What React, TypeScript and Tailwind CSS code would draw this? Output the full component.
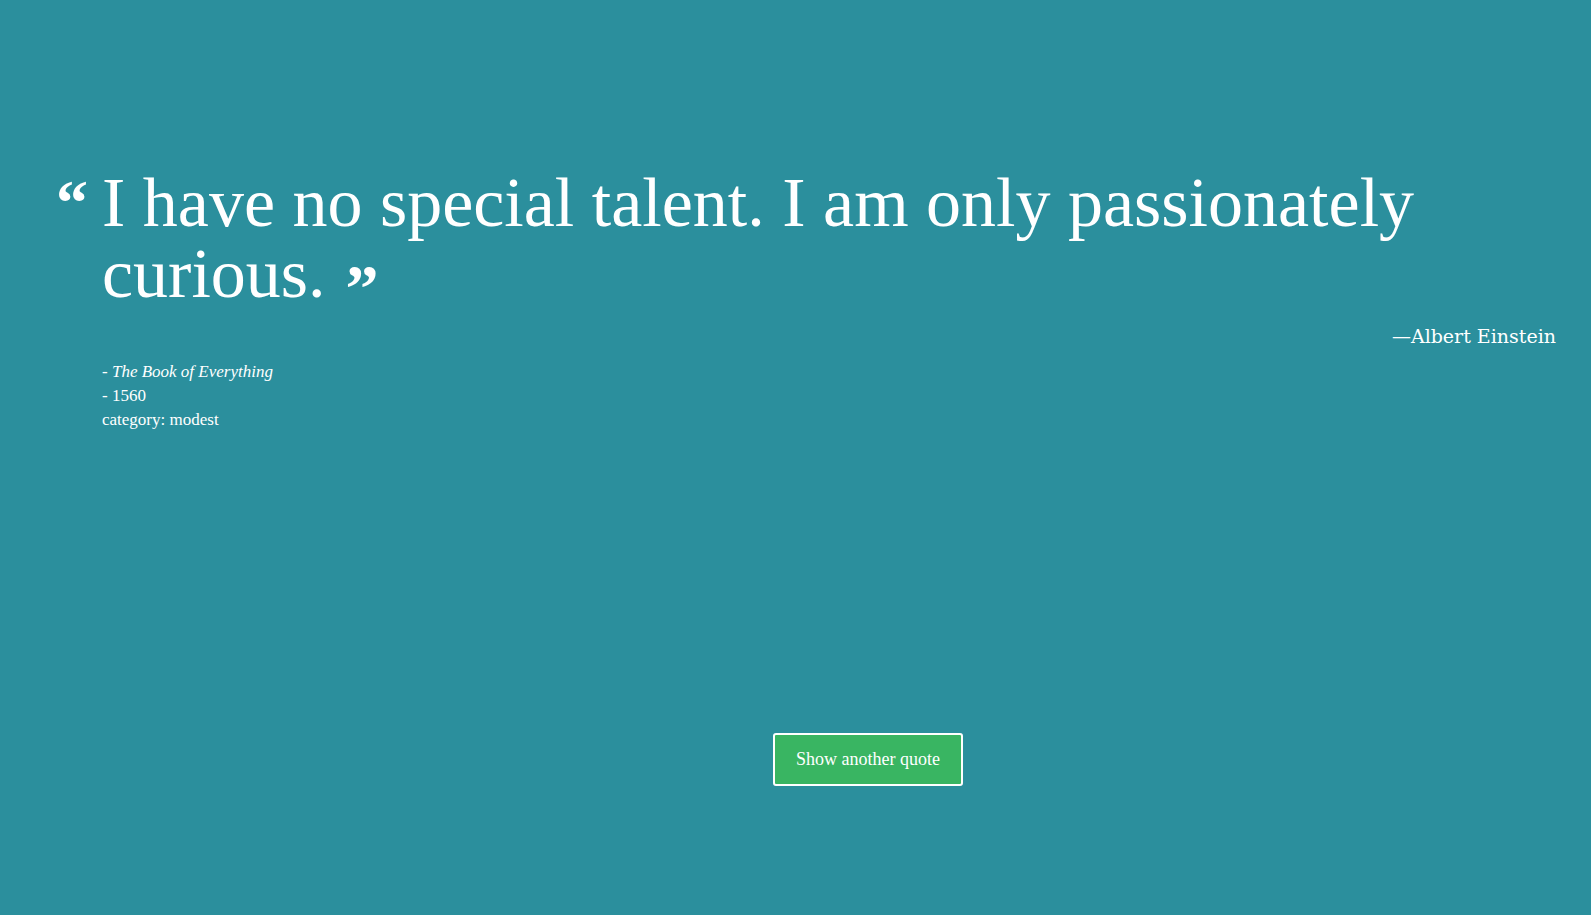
import type { JSX } from 'react'

const QUOTE = {
  text: 'I have no special talent. I am only passionately curious.',
  author: 'Albert Einstein',
  source: 'The Book of Everything',
  year: '1560',
  category: 'modest',
}

export default function App(): JSX.Element {
  return (
    <main
      className="min-h-[915px] w-full bg-[#2b8f9d] text-white"
      style={{ fontFamily: '"Liberation Serif", "Times New Roman", serif' }}
    >
      <div className="pt-[167px] pl-[102px] pr-[35px]">
        {/* Quote body */}
        <blockquote className="relative">
          <span className="absolute left-[-46px] top-[4px] text-[64px] font-bold leading-none">&ldquo;</span>
          <p className="text-[70px] leading-[71px]">
            {QUOTE.text}
            <span className="relative top-[13px] ml-[20px] text-[66px] font-bold leading-[0]">&rdquo;</span>
          </p>
        </blockquote>

        <p
          className="mt-[13px] text-right text-[19px] leading-[28px]"
          style={{ fontFamily: '"DejaVu Serif", serif' }}
        >
          &mdash;{QUOTE.author}
        </p>

        <div className="mt-[10px] text-[17px] leading-[24px]">
          <p>
            - <em>{QUOTE.source}</em>
          </p>
          <p>- {QUOTE.year}</p>
          <p>category: {QUOTE.category}</p>
        </div>
      </div>

      <div className="mt-[301px] pl-[773px]">
        <button className="rounded-[3px] border-2 border-white bg-[#39b562] px-[21px] py-[12px] text-[18px] leading-[25px] text-white">
          Show another quote
        </button>
      </div>
    </main>
  )
}
